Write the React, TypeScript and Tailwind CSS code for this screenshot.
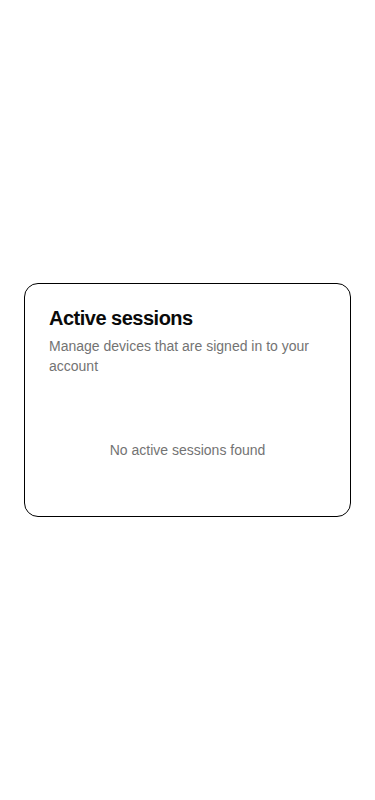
export default function App() {
  return (
    <main
      className="flex min-h-screen items-center justify-center bg-white px-6"
      style={{ fontFamily: '"Liberation Sans", Arial, sans-serif' }}
    >
      <section className="w-full rounded-[14px] border border-black bg-white">
        <div className="px-6 pt-6 pb-6">
          <h1 className="text-xl font-bold leading-none tracking-tight text-[#0a0a0a]">
            Active sessions
          </h1>
          <p className="mt-2 text-sm leading-5 text-[#737373]">
            Manage devices that are signed in to your account
          </p>
        </div>
        <div className="px-6 pt-10 pb-14 text-center text-sm leading-5 text-[#737373]">
          No active sessions found
        </div>
      </section>
    </main>
  );
}
